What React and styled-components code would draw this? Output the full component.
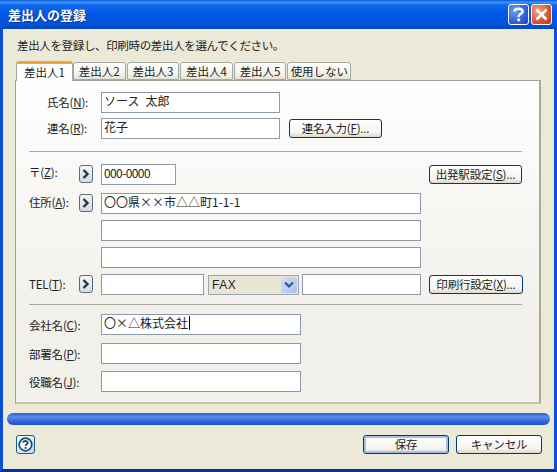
import React from "react"
import styled, { createGlobalStyle } from "styled-components"

const GlobalStyle = createGlobalStyle`
  html, body {
    margin: 0;
    padding: 0;
    background: #0a3ab8;
  }
  * {
    box-sizing: border-box;
  }
`

const Window = styled.div`
  width: 557px;
  height: 472px;
  display: flex;
  flex-direction: column;
  overflow: hidden;
  font-family: "Liberation Sans", "Noto Sans CJK JP", sans-serif;
  font-size: 12px;
  color: #222;
  background: #ece9d8;
`

const TitleBar = styled.div`
  height: 29px;
  flex: none;
  display: flex;
  align-items: center;
  justify-content: space-between;
  padding: 0 5px 1px 8px;
  background: linear-gradient(
    to bottom,
    #0a57d8 0%,
    #3d95ff 8%,
    #0f66ea 18%,
    #0058e6 50%,
    #0256dc 80%,
    #0349c0 100%
  );
`

const TitleText = styled.span`
  color: #fff;
  font-family: "Noto Sans CJK JP", sans-serif;
  font-size: 13px;
  font-weight: 700;
  text-shadow: 1px 1px 0 #0b2f86;
`

const TitleButtons = styled.div`
  display: flex;
  gap: 2px;
`

const TitleButton = styled.div`
  width: 21px;
  height: 21px;
  display: flex;
  align-items: center;
  justify-content: center;
  border: 1px solid #fff;
  border-radius: 3px;
  background: ${props =>
    props.$close
      ? "radial-gradient(circle at 30% 30%, #f0a58c, #d9532f 60%, #c23a17)"
      : "radial-gradient(circle at 30% 30%, #6f9cf0, #2f62dc 60%, #1c47c2)"};
`

const Body = styled.div`
  flex: 1;
  display: flex;
  flex-direction: column;
  border-left: 3px solid #0a50d4;
  border-right: 3px solid #0a50d4;
  border-bottom: 3px solid #06349c;
  padding: 9px 11px 0 12px;
`

const Intro = styled.p`
  margin: 0 0 0 2px;
  height: 15px;
  line-height: 15px;
  font-family: "Noto Sans CJK JP", sans-serif;
  font-size: 11.5px;
  letter-spacing: -0.35px;
`

const TabStrip = styled.div`
  display: flex;
  align-items: flex-end;
  height: 19px;
  margin-top: 8px;
  padding-left: 1px;
  position: relative;
  z-index: 1;
`

const Tab = styled.div`
  height: ${props => (props.$active ? "20px" : "18px")};
  margin-bottom: ${props => (props.$active ? "-1px" : "0")};
  width: ${props => props.$width}px;
  margin-right: ${props => (props.$active ? "0" : "1px")};
  padding-bottom: 1px;
  display: flex;
  align-items: center;
  justify-content: center;
  font-family: "Noto Sans CJK JP", sans-serif;
  font-size: 11.5px;
  background: ${props =>
    props.$active ? "#fff" : "linear-gradient(#fff, #f2f1ea 70%, #e6e3d6)"};
  border: 1px solid #a3a9a3;
  border-bottom: ${props => (props.$active ? "none" : "1px solid #a3a9a3")};
  border-top: ${props => (props.$active ? "3px solid #f0a830" : "1px solid #a3a9a3")};
  border-radius: 3px 3px 0 0;
`

const Panel = styled.div`
  width: 526px;
  flex: none;
  padding: 11px 16px 10px 13px;
  border: 1px solid #9a9f9a;
  border-right: 2px solid #aaa99c;
  border-bottom: 2px solid #c4c2b4;
  background: linear-gradient(to bottom, #fefefe, #f1f0ea 75%);
`

const Row = styled.div`
  display: flex;
  align-items: center;
  height: 21px;
  margin-top: ${props => props.$gap || 0}px;
`

const LabelCell = styled.div`
  width: 72px;
  height: 100%;
  flex: none;
  display: flex;
  align-items: center;
  justify-content: space-between;
  padding-left: ${props => props.$indent || 0}px;
  padding-right: 8px;
`

const Label = styled.label`
  padding-bottom: ${props => props.$lift || 0}px;
  font-family: "Noto Sans CJK JP", sans-serif;
  font-size: 11.5px;
  white-space: nowrap;
  letter-spacing: -0.2px;
  u {
    text-underline-offset: 1px;
  }
`

const ArrowButton = styled.div`
  width: 14px;
  height: 18px;
  align-self: flex-start;
  margin-top: 1px;
  display: flex;
  align-items: center;
  justify-content: center;
  border: 1px solid #5a6d80;
  border-radius: 3px;
  background: linear-gradient(to bottom, #f6f6f0, #d5d9e6);
`

const Field = styled.div`
  width: ${props => props.$width}px;
  height: 21px;
  flex: none;
  margin-left: ${props => props.$left || 0}px;
  padding: 0 2px 4px;
  display: flex;
  align-items: center;
  white-space: pre;
  font-family: "Noto Sans CJK JP", sans-serif;
  font-size: 12px;
  letter-spacing: ${props => (props.$tight ? "-0.6px" : "0")};
  background: #fff;
  border: 1px solid #8b9aa6;
`

const Caret = styled.span`
  display: inline-block;
  width: 1px;
  height: 14px;
  margin-left: 1px;
  background: #000;
`

const Select = styled.div`
  width: 91px;
  height: 20px;
  flex: none;
  margin-left: 4px;
  padding: 1px 1px 1px 3px;
  display: flex;
  align-items: center;
  justify-content: space-between;
  font-size: 12px;
  letter-spacing: 0.6px;
  background: #e9e6d8;
  border: 1px solid #9aa5ae;
`

const SelectArrow = styled.div`
  width: 16px;
  height: 16px;
  display: flex;
  align-items: center;
  justify-content: center;
  border-radius: 2px;
  background: linear-gradient(135deg, #d2def8, #a9c0ee);
`

const Button = styled.div`
  width: ${props => props.$width}px;
  height: ${props => props.$height || 19}px;
  flex: none;
  margin-left: ${props => props.$left || 0}px;
  padding-bottom: 1px;
  display: flex;
  align-items: center;
  justify-content: center;
  white-space: nowrap;
  font-family: "Noto Sans CJK JP", sans-serif;
  font-size: 11.5px;
  letter-spacing: -0.2px;
  background: linear-gradient(to bottom, #fff, #f4f3ee 75%, #dcd8cc);
  border: 1px solid #003c74;
  border-radius: 3px;
  box-shadow: ${props =>
    props.$default ? "inset 0 0 0 2px #a6c0ec" : "none"};
  u {
    text-underline-offset: 1px;
  }
`

const Divider = styled.hr`
  height: 1px;
  margin: ${props => props.$top}px 1px ${props => props.$bottom}px 0;
  border: 0;
  background: #a8a89c;
`

const ProgressBar = styled.div`
  width: 543px;
  height: 12px;
  margin: 9px 0 0 -8px;
  flex: none;
  border-radius: 6px;
  background: linear-gradient(to bottom, #2a5fd8, #5a8cf0 35%, #2c5ed6 75%, #2350c4);
`

const Footer = styled.div`
  display: flex;
  align-items: center;
  margin-top: 10px;
  padding: 0 0 0 1px;
`

const HelpButton = styled.div`
  width: 19px;
  height: 19px;
  display: flex;
  align-items: center;
  justify-content: center;
  border: 1px solid #1e5a86;
  border-radius: 3px;
  background: linear-gradient(135deg, #fff, #c5d6ee);
`

const FooterButtons = styled.div`
  display: flex;
  gap: 7px;
  margin-left: auto;
  margin-right: 1px;
`

const Chevron = () => (
  <svg width="8" height="10" viewBox="0 0 8 10">
    <path d="M1.5 1 L5.5 5 L1.5 9" fill="none" stroke="#1f3550" strokeWidth="2.4" />
  </svg>
)

const DownChevron = () => (
  <svg width="10" height="8" viewBox="0 0 10 8">
    <path d="M1 1.5 L5 5.5 L9 1.5" fill="none" stroke="#3a5488" strokeWidth="2.2" />
  </svg>
)

const HelpIcon = () => (
  <svg width="15" height="15" viewBox="0 0 15 15">
    <circle cx="7.5" cy="7.5" r="6.3" fill="#fff" stroke="#1d4f7c" strokeWidth="1.8" />
    <path
      d="M5.2 5.8 C5.2 3.4 9.8 3.4 9.8 5.7 C9.8 7.2 7.5 7.2 7.5 9"
      fill="none"
      stroke="#1d4f7c"
      strokeWidth="1.8"
    />
    <rect x="6.6" y="10" width="1.9" height="1.9" fill="#1d4f7c" />
  </svg>
)

const tabs = [
  { name: "差出人1", width: 57, active: true },
  { name: "差出人2", width: 52.6 },
  { name: "差出人3", width: 52.6 },
  { name: "差出人4", width: 52.6 },
  { name: "差出人5", width: 52.6 },
  { name: "使用しない", width: 64 },
]

const App = () => (
  <Window>
    <GlobalStyle />
    <TitleBar>
      <TitleText>差出人の登録</TitleText>
      <TitleButtons>
        <TitleButton>
          <svg width="13" height="15" viewBox="0 0 13 15">
            <path
              d="M2.5 4.6 C2.5 0.8 10.6 0.8 10.6 4.4 C10.6 7 6.6 6.8 6.6 10"
              fill="none"
              stroke="#fff"
              strokeWidth="2.4"
            />
            <rect x="5.3" y="11.4" width="2.8" height="2.8" fill="#fff" />
          </svg>
        </TitleButton>
        <TitleButton $close>
          <svg width="13" height="13" viewBox="0 0 13 13">
            <path d="M1.5 1.5 L11.5 11.5 M11.5 1.5 L1.5 11.5" stroke="#fff" strokeWidth="2.6" />
          </svg>
        </TitleButton>
      </TitleButtons>
    </TitleBar>
    <Body>
      <Intro>差出人を登録し、印刷時の差出人を選んでください。</Intro>
      <TabStrip>
        {tabs.map(tab => (
          <Tab key={tab.name} $active={tab.active} $width={tab.width}>
            {tab.name}
          </Tab>
        ))}
      </TabStrip>
      <Panel>
        <Row>
          <LabelCell $indent={18}>
            <Label $lift={2}>氏名(<u>N</u>):</Label>
          </LabelCell>
          <Field $width={179}>{"ソース\u2002太郎"}</Field>
        </Row>
        <Row $gap={5}>
          <LabelCell $indent={18}>
            <Label $lift={2}>連名(<u>R</u>):</Label>
          </LabelCell>
          <Field $width={179}>花子</Field>
          <Button $width={93} $left={9}>連名入力(<u>F</u>)...</Button>
        </Row>
        <Divider $top={12} $bottom={12} />
        <Row>
          <LabelCell>
            <Label $lift={6}>〒(<u>Z</u>):</Label>
            <ArrowButton><Chevron /></ArrowButton>
          </LabelCell>
          <Field $width={75} $tight>000-0000</Field>
          <Button $width={93} $left={253}>出発駅設定(<u>S</u>)...</Button>
        </Row>
        <Row $gap={8}>
          <LabelCell>
            <Label $lift={4}>住所(<u>A</u>):</Label>
            <ArrowButton><Chevron /></ArrowButton>
          </LabelCell>
          <Field $width={320}>〇〇県××市△△町1-1-1</Field>
        </Row>
        <Row $gap={6}>
          <LabelCell />
          <Field $width={320} />
        </Row>
        <Row $gap={6}>
          <LabelCell />
          <Field $width={320} />
        </Row>
        <Row $gap={6}>
          <LabelCell>
            <Label $lift={2}>TEL(<u>T</u>):</Label>
            <ArrowButton><Chevron /></ArrowButton>
          </LabelCell>
          <Field $width={103} />
          <Select>
            FAX
            <SelectArrow><DownChevron /></SelectArrow>
          </Select>
          <Field $width={119} $left={3} />
          <Button $width={94} $left={8}>印刷行設定(<u>X</u>)...</Button>
        </Row>
        <Divider $top={9} $bottom={9} />
        <Row>
          <LabelCell>
            <Label>会社名(<u>C</u>):</Label>
          </LabelCell>
          <Field $width={200}>〇×△株式会社<Caret /></Field>
        </Row>
        <Row $gap={8}>
          <LabelCell>
            <Label>部署名(<u>P</u>):</Label>
          </LabelCell>
          <Field $width={200} />
        </Row>
        <Row $gap={7}>
          <LabelCell>
            <Label>役職名(<u>J</u>):</Label>
          </LabelCell>
          <Field $width={200} />
        </Row>
      </Panel>
      <ProgressBar />
      <Footer>
        <HelpButton><HelpIcon /></HelpButton>
        <FooterButtons>
          <Button $width={86} $height={19} $default>保存</Button>
          <Button $width={86} $height={19}>キャンセル</Button>
        </FooterButtons>
      </Footer>
    </Body>
  </Window>
)

export default App
